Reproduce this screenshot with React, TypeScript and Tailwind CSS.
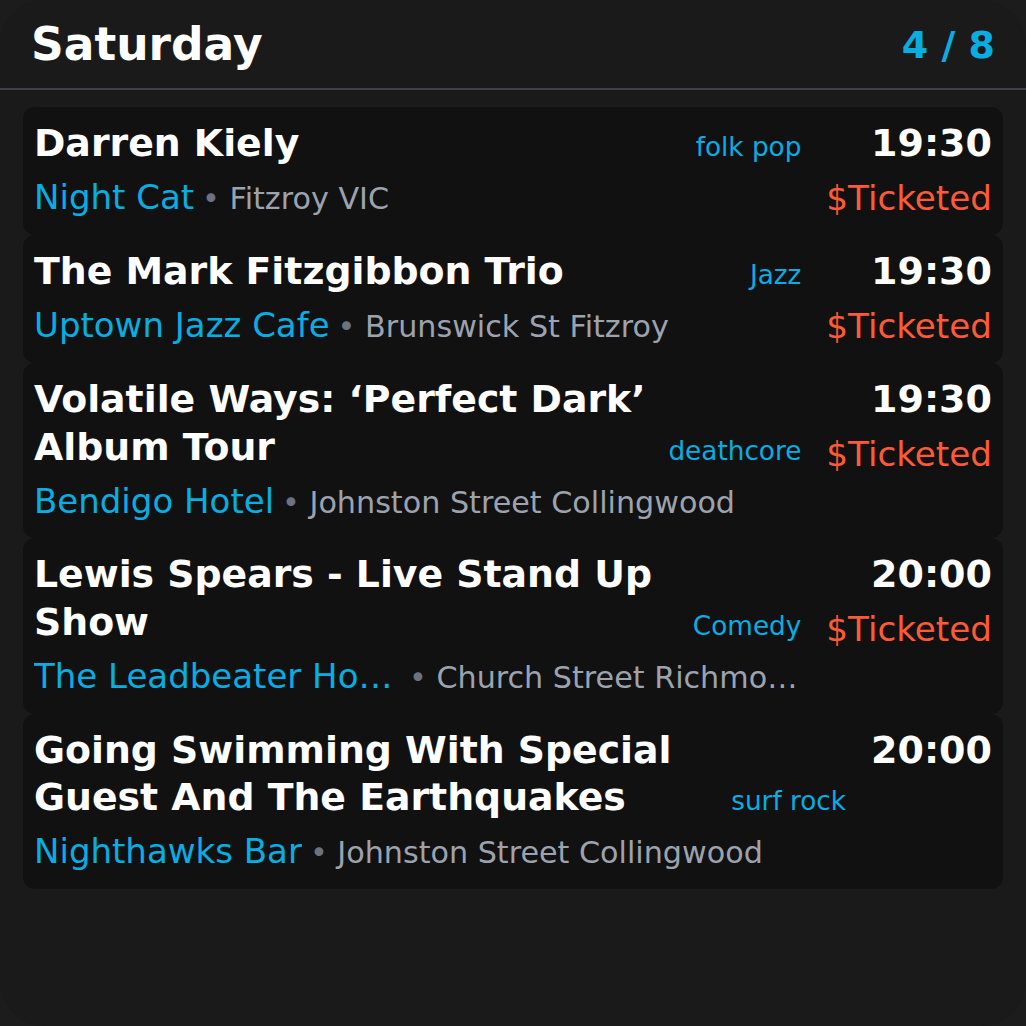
import React from "react";

type Gig = {
  title: string;
  genre: string;
  time: string;
  price?: string;
  venue: string;
  address: string;
};

const gigs: Gig[] = [
  { title: "Darren Kiely", genre: "folk pop", time: "19:30", price: "$Ticketed", venue: "Night Cat", address: "Fitzroy VIC" },
  { title: "The Mark Fitzgibbon Trio", genre: "Jazz", time: "19:30", price: "$Ticketed", venue: "Uptown Jazz Cafe", address: "Brunswick St Fitzroy" },
  { title: "Volatile Ways: \u2018Perfect Dark\u2019 Album Tour", genre: "deathcore", time: "19:30", price: "$Ticketed", venue: "Bendigo Hotel", address: "Johnston Street Collingwood" },
  { title: "Lewis Spears - Live Stand Up Show", genre: "Comedy", time: "20:00", price: "$Ticketed", venue: "The Leadbeater Hotel Richmond", address: "Church Street Richmond VIC" },
  { title: "Going Swimming With Special Guest And The Earthquakes", genre: "surf rock", time: "20:00", venue: "Nighthawks Bar", address: "Johnston Street Collingwood" },
];

function Card({ g }: { g: Gig }) {
  return (
    <div className="rounded-xl bg-[#111111] px-[11px] pt-[13px] pb-[12px] flex gap-[25px]">
      <div className="flex-1 min-w-0 flex flex-col">
        <div className="flex items-end gap-3">
          <div className="flex-1 min-w-0 text-white font-bold text-[37.8px] leading-[1.26]">{g.title}</div>
          <div className="shrink-0 text-[#08ade2] text-[26.3px] leading-[1.5]">{g.genre}</div>
        </div>
        <div className="flex items-baseline mt-[5px] min-w-0 whitespace-nowrap">
          <span className="shrink-0 max-w-[367px] truncate text-[#08ade2] text-[34px] leading-[1.47]">{g.venue}</span>
          <span className="ml-2 min-w-0 truncate text-[#9ca3af] text-[30.2px] leading-[1.5]">
            <span className="text-[#6b7280]">{"\u2022"}</span> {g.address}
          </span>
        </div>
      </div>
      <div className="shrink-0 flex flex-col items-end">
        <div className="text-white font-bold text-[38px] leading-[1.26]">{g.time}</div>
        {g.price && (
          <div className="mt-[5px] text-[#ff5a36] text-[34.2px] leading-[1.47]">{g.price}</div>
        )}
      </div>
    </div>
  );
}

export default function App() {
  return (
    <div className="w-[1026px] h-[1026px] bg-[#1c1c1c]" style={{ fontFamily: '"DejaVu Sans", sans-serif' }}>
      <div className="w-full h-full bg-[#1a1a1a] rounded-[44px] overflow-hidden">
        <div className="h-[90px] px-[31px] flex items-center justify-between border-b-2 border-[#3a3f4b]">
          <div className="text-white font-bold text-[45.5px] leading-none mt-[2px]">Saturday</div>
          <div className="text-[#08ade2] font-bold text-[38px] leading-none mt-[2px]">4 / 8</div>
        </div>
        <div className="px-[23px] pt-[17px] flex flex-col">
          {gigs.map((g, i) => (
            <Card key={i} g={g} />
          ))}
        </div>
      </div>
    </div>
  );
}
